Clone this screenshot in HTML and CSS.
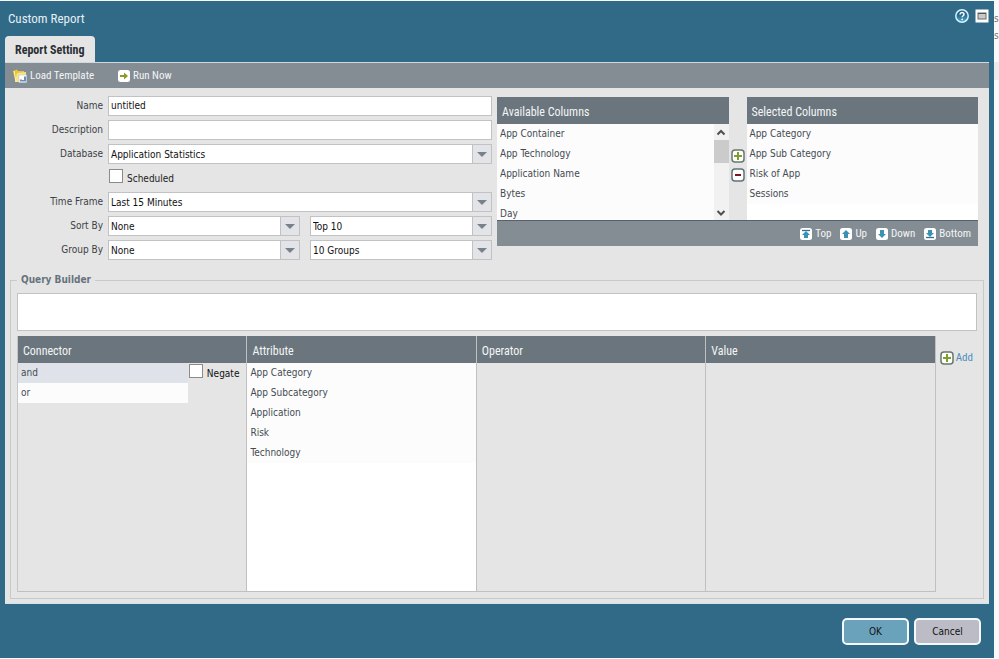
FILE: index.html
```html
<!DOCTYPE html>
<html lang="en">
<head>
<meta charset="utf-8">
<title>Custom Report</title>
<link rel="stylesheet" href="styles.css">
</head>
<body>
<svg class="defs" aria-hidden="true">
  <defs>
    <linearGradient id="glass" x1="0" y1="0" x2="0" y2="1">
      <stop offset="0" stop-color="#1d5680"/><stop offset=".5" stop-color="#2b7199"/><stop offset="1" stop-color="#4fb4d4"/>
    </linearGradient>
    <symbol id="plus" viewBox="0 0 14 14">
      <rect x="1" y="1" width="12" height="12" rx="3" fill="#fff" stroke="#66786b" stroke-width="1.5"/>
      <path d="M7 3v8M3 7h8" stroke="#7f9f2c" stroke-width="2"/>
    </symbol>
    <symbol id="minus" viewBox="0 0 14 14">
      <rect x="1" y="1" width="12" height="12" rx="3" fill="#fff" stroke="#5f7379" stroke-width="1.5"/>
      <path d="M4 7h6" stroke="#7d1420" stroke-width="2"/>
    </symbol>
  </defs>
</svg>
<div class="dialog" role="dialog" aria-labelledby="dialog-title">
  <header class="titlebar">
    <h1 class="title" id="dialog-title">Custom Report</h1>
    <div class="window-tools">
      <button class="icon-button" type="button" aria-label="Help">
        <svg width="14" height="14" viewBox="0 0 14 14"><circle cx="7" cy="7" r="6.2" fill="url(#glass)" stroke="#d9f0f8" stroke-width="1.5"/><path d="M5.1 5.5c0-2.7 4-2.5 3.9-.1C8.900 6.800 7.200 6.700 7.200 8.300" fill="none" stroke="#fff" stroke-width="1.5"/><circle cx="7.200" cy="10.300" r=".9" fill="#fff"/></svg>
      </button>
      <button class="icon-button" type="button" aria-label="Maximize">
        <svg width="14" height="14" viewBox="0 0 14 14"><rect x=".5" y=".5" width="13" height="13" fill="#fff"/><rect x="3" y="4" width="8" height="6" fill="#c9c9c9" stroke="#6d6d6d"/><path d="M3 4.500h8" stroke="#555" /></svg>
      </button>
    </div>
  </header>
  <nav class="tabs"><button class="tab" type="button">Report Setting</button></nav>
  <main class="panel">
    <div class="toolbar">
      <button class="tool" type="button">
        <svg width="14" height="14" viewBox="0 0 14 14"><path d="M0 2l4-1.500 1 1.500h6v8H2z" fill="#e9c53a"/><path d="M2 13L4 4l9-1v4l-6 6z" fill="#f8e584"/><path d="M1 2l2 11" stroke="#fff3ac"/><rect x="6" y="6" width="7.500" height="7.500" fill="#fff" stroke="#b7cbe0" stroke-width=".6"/><path d="M8 12.500v-2M10 12.500v-1.500M12 12.500v-5" stroke="#244f8c" stroke-width="1.300"/></svg>
        Load Template
      </button>
      <button class="tool" type="button">
        <svg width="12" height="12" viewBox="0 0 12 12"><rect width="12" height="12" rx="2.500" fill="#fff"/><path d="M2 6h5" stroke="#8a9b26" stroke-width="2"/><path d="M6 2.500L10 6 6 9.500z" fill="#8a9b26"/></svg>
        Run Now
      </button>
    </div>

    <div class="setup">
      <form class="form">
        <label for="name">Name</label>
        <input class="field" id="name" type="text" value="untitled">
        <label for="description">Description</label>
        <input class="field" id="description" type="text">
        <label for="database">Database</label>
        <span class="combo"><select class="field" id="database"><option>Application Statistics</option></select></span>
        <span class="check form-check"><input class="box" id="scheduled" type="checkbox"><label for="scheduled">Scheduled</label></span>
        <label for="time-frame">Time Frame</label>
        <span class="combo"><select class="field" id="time-frame"><option>Last 15 Minutes</option></select></span>
        <label for="sort-by">Sort By</label>
        <span class="pair">
          <span class="combo"><select class="field" id="sort-by"><option>None</option></select></span>
          <span class="combo"><select class="field" aria-label="Sort limit"><option>Top 10</option></select></span>
        </span>
        <label for="group-by">Group By</label>
        <span class="pair">
          <span class="combo"><select class="field" id="group-by"><option>None</option></select></span>
          <span class="combo"><select class="field" aria-label="Group limit"><option>10 Groups</option></select></span>
        </span>
      </form>

      <section class="picker">
        <div class="picker-lists">
          <div class="column">
            <h2 class="head">Available Columns</h2>
            <div class="scroll-area">
              <ul class="list"><li>App Container</li><li>App Technology</li><li>Application Name</li><li>Bytes</li><li>Day</li></ul>
              <div class="scrollbar" aria-hidden="true">
                <svg width="14" height="16" viewBox="0 0 14 16"><path d="M3.500 10.500L7 7l3.500 3.500" fill="none" stroke="#505050" stroke-width="2"/></svg>
                <span class="thumb"></span>
                <svg width="14" height="16" viewBox="0 0 14 16"><path d="M3.500 7L7 10.500 10.500 7" fill="none" stroke="#505050" stroke-width="2"/></svg>
              </div>
            </div>
          </div>
          <div class="movers">
            <button class="icon-button" type="button" aria-label="Add column"><svg width="14" height="14"><use href="#plus"/></svg></button>
            <button class="icon-button" type="button" aria-label="Remove column"><svg width="14" height="14"><use href="#minus"/></svg></button>
          </div>
          <div class="column">
            <h2 class="head">Selected Columns</h2>
            <ul class="list"><li>App Category</li><li>App Sub Category</li><li>Risk of App</li><li>Sessions</li></ul>
          </div>
        </div>
        <div class="order-bar">
          <button class="tool" type="button"><svg width="12" height="12" viewBox="0 0 12 12"><rect width="12" height="12" rx="2.500" fill="#fff"/><path d="M2 2.500h8" stroke="#32718f" stroke-width="1.300"/><path d="M6 3l4 4H8v3H4V7H2z" fill="#3a93b5"/></svg>Top</button>
          <button class="tool" type="button"><svg width="12" height="12" viewBox="0 0 12 12"><rect width="12" height="12" rx="2.500" fill="#fff"/><path d="M6 2l4 4H8v4H4V6H2z" fill="#3a93b5"/></svg>Up</button>
          <button class="tool" type="button"><svg width="12" height="12" viewBox="0 0 12 12"><rect width="12" height="12" rx="2.500" fill="#fff"/><path d="M6 10L2 6h2V2h4v4h2z" fill="#3a93b5"/></svg>Down</button>
          <button class="tool" type="button"><svg width="12" height="12" viewBox="0 0 12 12"><rect width="12" height="12" rx="2.500" fill="#fff"/><path d="M2 9.500h8" stroke="#32718f" stroke-width="1.300"/><path d="M6 9L2 5h2V2h4v3h2z" fill="#3a93b5"/></svg>Bottom</button>
        </div>
      </section>
    </div>

    <fieldset class="query">
      <legend>Query Builder</legend>
      <div class="query-body">
        <textarea class="query-text" aria-label="Query"></textarea>
        <div class="builder">
          <div class="grid">
            <section class="cell">
              <h2 class="head">Connector</h2>
              <div class="connector">
                <ul class="list"><li class="selected">and</li><li>or</li></ul>
                <span class="check negate"><input class="box" id="negate" type="checkbox"><label for="negate">Negate</label></span>
              </div>
            </section>
            <section class="cell filled">
              <h2 class="head">Attribute</h2>
              <ul class="list"><li>App Category</li><li>App Subcategory</li><li>Application</li><li>Risk</li><li>Technology</li></ul>
            </section>
            <section class="cell"><h2 class="head">Operator</h2></section>
            <section class="cell"><h2 class="head">Value</h2></section>
          </div>
          <button class="add" type="button"><svg width="14" height="14"><use href="#plus"/></svg>Add</button>
        </div>
      </div>
    </fieldset>
  </main>
  <footer class="actions">
    <button class="action primary" type="button">OK</button>
    <button class="action" type="button">Cancel</button>
  </footer>
</div>
<aside class="backdrop"><span>s</span><span>s</span><i></i></aside>
</body>
</html>
```
FILE: styles.css
```css
* { box-sizing: border-box; }

body {
  --heading: "Roboto Condensed", Roboto, sans-serif;
  margin: 0;
  min-height: 100vh;
  display: grid;
  grid-template-columns: minmax(0, 1fr) 5px;
  padding: 1px 0;
  background: #f7f9fb;
  color: #3b3f45;
  font: 10px/20px "DejaVu Sans Condensed", "Noto Sans", sans-serif;
}

button, input, select, textarea { font: inherit; color: inherit; margin: 0; }
button { border: 0; padding: 0; background: none; }
h1, h2, ul { margin: 0; padding: 0; list-style: none; font-weight: normal; }
svg { display: block; flex: none; }
.defs { position: absolute; width: 0; height: 0; }

.dialog {
  display: flex;
  flex-direction: column;
  padding: 0 5px;
  background: #316a87;
}

.titlebar {
  display: flex;
  justify-content: space-between;
  align-items: center;
  height: 35px;
  padding: 0 0 0 3px;
}
.title { font: 13px/20px var(--heading); color: #e3eff5; }
.window-tools { display: flex; gap: 6px; padding-bottom: 5px; }

.tab {
  display: block;
  height: 26px;
  padding: 0 10px;
  border-radius: 4px 4px 0 0;
  background: #e5e5e5;
  color: #2b2f33;
  font: bold 12px/28px var(--heading);
}

.panel {
  flex: 1;
  display: flex;
  flex-direction: column;
  border-top: 1px solid #cfd9de;
  border-bottom: 1px solid #cfe3ec;
  background: #e5e5e5;
}

.toolbar {
  display: flex;
  align-items: center;
  gap: 24px;
  height: 25px;
  padding: 0 8px;
  background: #858d94;
}
.tool {
  display: flex;
  align-items: center;
  gap: 3px;
  color: #f3f5f6;
  font: 11px/20px var(--heading);
}

.setup {
  display: grid;
  grid-template-columns: minmax(0, 487fr) minmax(0, 481fr);
  gap: 5px;
  padding: 8px 11px 0 0;
}

.form {
  display: grid;
  grid-template-columns: 98px minmax(0, 1fr);
  gap: 4px 5px;
}
.form > label { text-align: right; }
.field {
  display: block;
  width: 100%;
  height: 20px;
  padding: 0 2px;
  border: 1px solid #c0c2c4;
  border-radius: 0;
  background: #fff;
  color: #111;
  appearance: none;
}
.combo { position: relative; display: block; }
.combo .field { padding-right: 20px; }
.combo::before {
  content: "";
  position: absolute;
  inset: 0 0 0 auto;
  box-sizing: border-box;
  width: 20px;
  border: 1px solid #c0c2c4;
  background: #e2e4e7;
  pointer-events: none;
}
.combo::after {
  content: "";
  position: absolute;
  top: 8px;
  right: 5px;
  border: 5px solid transparent;
  border-top-color: #77838b;
  border-bottom: 0;
  pointer-events: none;
}
.pair { display: grid; grid-template-columns: 192fr 182fr; gap: 10px; }

.check { display: flex; gap: 4px; color: #222; }
.form-check { grid-column: 2; padding: 1px 0 0 1px; height: 20px; }
.box {
  width: 14px;
  height: 14px;
  border: 1px solid #8a8a8a;
  background: #fff;
  appearance: none;
}

.picker { display: flex; flex-direction: column; padding-top: 1px; }
.picker-lists {
  display: grid;
  grid-template-columns: minmax(0, 1fr) 18px minmax(0, 1fr);
  height: 123px;
}
.column { background: #fff; overflow: hidden; }
.head {
  height: 27px;
  padding: 2px 5px 0;
  background: #6b757d;
  color: #f3f5f6;
  font: 12px/26px var(--heading);
}
.list li { height: 20px; padding: 0 3px; background: #fcfcfc; color: #454b53; }
.scroll-area { display: flex; height: 96px; }
.scroll-area .list { flex: 1; }
.scrollbar {
  display: flex;
  flex-direction: column;
  width: 15px;
  background: #f1f1f1;
}
.thumb { height: 23px; margin-bottom: auto; background: #cbcbcb; }
.movers {
  display: flex;
  flex-direction: column;
  align-items: center;
  gap: 5px;
  padding-top: 52px;
}
.order-bar {
  display: flex;
  align-items: center;
  justify-content: flex-end;
  gap: 9px;
  height: 26px;
  padding: 0 7px;
  border-top: 1px solid #56616a;
  background: #858d94;
}

.query {
  flex: 1;
  display: flex;
  min-width: 0;
  margin: 10px 5px 4px;
  padding: 3px 6px 6px;
  border: 1px solid #c9c9c9;
}
.query legend { margin-left: 0; padding: 0 4px; color: #66737d; font-weight: bold; }
.query-body { flex: 1; display: flex; flex-direction: column; gap: 5px; }
.query-text {
  display: block;
  width: 100%;
  height: 38px;
  border: 1px solid #c0c2c4;
  background: #fff;
  resize: none;
}
.builder { flex: 1; display: flex; gap: 4px; padding-right: 4px; }
.grid {
  flex: 1;
  display: grid;
  grid-template-columns: repeat(4, minmax(0, 1fr));
  border-left: 1px solid #c6c6c6;
}
.cell { border: solid #c0c0c0; border-width: 0 1px 1px 0; }
.cell.filled { background: #fff; }
.connector { display: flex; }
.connector .list { flex: 1; }
.list .selected { background: #dfe2e8; }
.negate { padding: 1px 7px 0 1px; color: #111; }
.add {
  display: flex;
  align-items: center;
  align-self: flex-start;
  gap: 2px;
  margin-top: 12px;
  color: #4c8fbd;
  font: 11px/20px var(--heading);
}

.actions {
  display: flex;
  justify-content: flex-end;
  gap: 5px;
  padding: 14px 8px 13px;
}
.action {
  width: 67px;
  height: 27px;
  border: 2px solid #f4f8fa;
  border-radius: 5px;
  background: #bcbcc6;
  color: #111;
}
.action.primary { background: #6ba2bb; }

.backdrop { overflow: hidden; padding-top: 9px; color: #777; line-height: 17px; }
.backdrop span { display: block; }
.backdrop i { display: block; height: 18px; margin-top: 18px; background: #e9ebed; }
```
